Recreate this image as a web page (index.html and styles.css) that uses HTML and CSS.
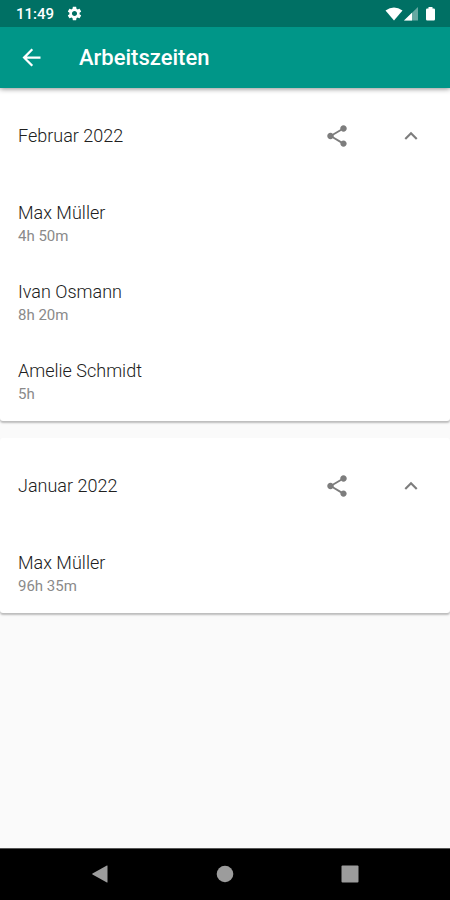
FILE: index.html
```html
<!DOCTYPE html>
<html lang="de">
<head>
<meta charset="utf-8">
<meta name="viewport" content="width=device-width, initial-scale=1">
<title>Arbeitszeiten</title>
<link rel="stylesheet" href="styles.css">
</head>
<body>
<svg class="defs" aria-hidden="true">
  <symbol id="share" viewBox="0 0 24 24"><path d="M18 16.08c-.76 0-1.44.3-1.96.77L8.91 12.7c.05-.23.09-.46.09-.7s-.04-.47-.09-.7l7.05-4.11c.54.5 1.25.81 2.04.81 1.66 0 3-1.34 3-3s-1.34-3-3-3-3 1.34-3 3c0 .24.04.47.09.7L8.04 9.81C7.5 9.31 6.79 9 6 9c-1.66 0-3 1.34-3 3s1.34 3 3 3c.79 0 1.5-.31 2.04-.81l7.12 4.16c-.05.21-.08.43-.08.65 0 1.61 1.31 2.92 2.92 2.92s2.92-1.31 2.92-2.92-1.31-2.92-2.92-2.92z"/></symbol>
  <symbol id="collapse" viewBox="0 0 24 24"><path d="M12 8l-6 6 1.41 1.41L12 10.83l4.59 4.58L18 14z"/></symbol>
</svg>
<header class="top">
  <div class="status">
    <span class="clock">11:49</span>
    <svg class="gear" viewBox="0 0 24 24" aria-hidden="true"><path d="M19.14 12.94c.04-.3.06-.61.06-.94 0-.32-.02-.64-.07-.94l2.03-1.58c.18-.14.23-.41.12-.61l-1.92-3.32c-.12-.22-.37-.29-.59-.22l-2.39.96c-.5-.38-1.03-.7-1.62-.94l-.36-2.54c-.04-.24-.24-.41-.48-.41h-3.84c-.24 0-.43.17-.47.41l-.36 2.54c-.59.24-1.13.57-1.62.94l-2.39-.96c-.22-.08-.47 0-.59.22L2.74 8.87c-.12.21-.08.47.12.61l2.03 1.58c-.05.3-.09.63-.09.94s.02.64.07.94l-2.03 1.58c-.18.14-.23.41-.12.61l1.92 3.32c.12.22.37.29.59.22l2.39-.96c.5.38 1.03.7 1.62.94l.36 2.54c.05.24.24.41.48.41h3.84c.24 0 .44-.17.47-.41l.36-2.54c.59-.24 1.13-.56 1.62-.94l2.39.96c.22.08.47 0 .59-.22l1.92-3.32c.12-.22.07-.47-.12-.61l-2.01-1.58zM12 15.6c-1.98 0-3.6-1.62-3.6-3.6s1.62-3.6 3.6-3.6 3.6 1.62 3.6 3.6-1.62 3.6-3.6 3.6z"/></svg>
    <svg class="signals" viewBox="0 0 52 16" aria-hidden="true">
      <path d="M0.500 4.500Q9 -1.500 17.500 4.500L9 14.500z"/>
      <path opacity=".4" d="M19 14.500L33 1v13.500z"/>
      <path d="M19 14.500L27 6.800v7.700z"/>
      <path d="M43.500 1h4v1.500h1.300q1.200 0 1.200 1.200v9.600q0 1.200-1.200 1.200h-6.600q-1.200 0-1.200-1.200v-9.600q0-1.200 1.200-1.200h1.300z"/>
    </svg>
  </div>
  <div class="appbar">
    <button class="back" type="button" aria-label="Zurück"><svg viewBox="0 0 24 24"><path d="M20 11H7.830l5.590-5.590L12 4l-8 8 8 8 1.410-1.410L7.830 13H20z"/></svg></button>
    <h1>Arbeitszeiten</h1>
  </div>
</header>
<main>
  <section class="card">
    <div class="month">
      <h2>Februar 2022</h2>
      <button class="action" type="button" aria-label="Teilen"><svg><use href="#share"/></svg></button>
      <button class="action" type="button" aria-label="Einklappen" aria-expanded="true"><svg><use href="#collapse"/></svg></button>
    </div>
    <ul>
      <li><span class="name">Max Müller</span><span class="time">4h 50m</span></li>
      <li><span class="name">Ivan Osmann</span><span class="time">8h 20m</span></li>
      <li><span class="name">Amelie Schmidt</span><span class="time">5h</span></li>
    </ul>
  </section>
  <section class="card">
    <div class="month">
      <h2>Januar 2022</h2>
      <button class="action" type="button" aria-label="Teilen"><svg><use href="#share"/></svg></button>
      <button class="action" type="button" aria-label="Einklappen" aria-expanded="true"><svg><use href="#collapse"/></svg></button>
    </div>
    <ul>
      <li><span class="name">Max Müller</span><span class="time">96h 35m</span></li>
    </ul>
  </section>
</main>
<nav class="system">
  <button type="button" aria-label="Zurück"><svg viewBox="0 0 18 18"><path d="M16.500 .8v16.400q0 .6-.6.300L1.500 9.500q-.8-.5 0-1L15.900.5q.6-.3.600.3z"/></svg></button>
  <button type="button" aria-label="Startbildschirm"><svg viewBox="0 0 18 18"><circle cx="9" cy="9" r="8.300"/></svg></button>
  <button type="button" aria-label="Übersicht"><svg viewBox="0 0 18 18"><rect x=".5" y=".5" width="17" height="17" rx="1"/></svg></button>
</nav>
</body>
</html>
```
FILE: styles.css
```css
* {
  box-sizing: border-box;
}

body {
  margin: 0;
  min-height: 100vh;
  display: flex;
  flex-direction: column;
  background: #fafafa;
  color: #202020;
  font-family: Roboto, sans-serif;
}

svg {
  display: block;
  fill: currentColor;
}

.defs {
  display: none;
}

button {
  display: flex;
  align-items: center;
  justify-content: center;
  padding: 0;
  border: 0;
  background: none;
  color: inherit;
}

h1,
h2,
ul {
  margin: 0;
  padding: 0;
}

.top {
  color: #fff;
  background: #009688;
  box-shadow: 0 1px 5px rgba(0, 0, 0, 0.45);
  z-index: 1;
}

.status {
  display: flex;
  align-items: center;
  height: 27px;
  padding: 0 13px 0 16px;
  background: #007064;
}

.clock {
  font-size: 15px;
  font-weight: 500;
  line-height: 28px;
}

.gear {
  width: 17px;
  height: 17px;
  margin-left: 12px;
}

.signals {
  width: 52px;
  height: 16px;
  margin-left: auto;
}

.appbar {
  display: flex;
  align-items: center;
  gap: 24px;
  height: 61px;
  padding: 0 7px;
}

.back {
  width: 48px;
  height: 48px;
}

.back svg {
  width: 27px;
  height: 27px;
}

h1 {
  font-size: 22px;
  font-weight: 500;
  line-height: 28px;
}

main {
  flex: 1;
}

.card {
  background: #fff;
  border-radius: 3px;
  box-shadow: 0 2px 2px rgba(0, 0, 0, 0.25);
}

.card + .card {
  margin-top: 17px;
}

.month {
  display: flex;
  align-items: center;
  gap: 26px;
  height: 96px;
  padding: 0 15px 0 18px;
}

h2 {
  flex: 1;
  font-size: 18px;
  font-weight: 300;
  line-height: 24px;
}

.action {
  width: 48px;
  height: 48px;
  color: #7d7d7d;
}

.action svg {
  width: 26px;
  height: 26px;
}

li {
  display: flex;
  flex-direction: column;
  padding: 17px 18px 16px;
}

.name {
  font-size: 18px;
  font-weight: 300;
  line-height: 24px;
}

.time {
  color: #8a8a8a;
  font-size: 15px;
  line-height: 22px;
}

.system {
  display: flex;
  justify-content: center;
  gap: 77px;
  height: 52px;
  padding-bottom: 1px;
  border-top: 1px solid #555;
  background: #000;
  color: #9c9c9c;
}

.system button {
  width: 48px;
}

.system svg {
  width: 18px;
  height: 18px;
}
```
